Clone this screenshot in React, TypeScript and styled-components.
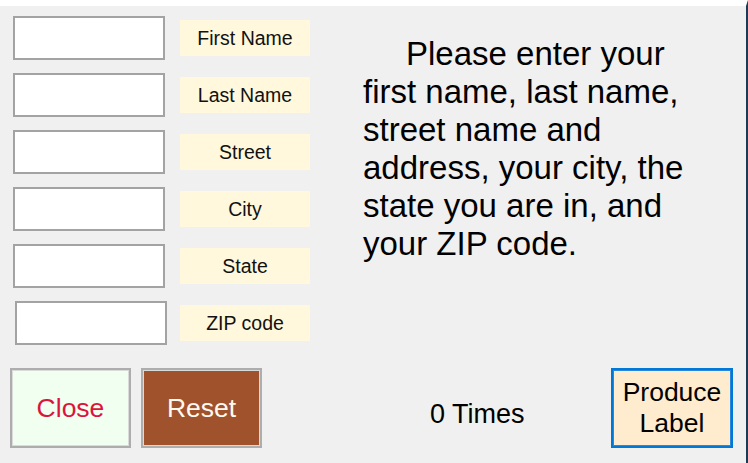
import React, { useState } from 'react';
import styled, { createGlobalStyle } from 'styled-components';

const GlobalStyle = createGlobalStyle`
  html, body {
    margin: 0;
    padding: 0;
    background: #ffffff;
  }
  * {
    box-sizing: border-box;
  }
`;

const Window = styled.div`
  width: 748px;
  height: 463px;
  background: #f0f0f0;
  border-top: 6px solid #ffffff;
  border-right: 2px solid #1f3a52;
  font-family: 'Liberation Sans', Arial, sans-serif;
  color: #000;
  overflow: hidden;
`;

const TopSection = styled.div`
  display: flex;
  align-items: flex-start;
  padding: 10px 0 0 13px;
`;

const FieldList = styled.div`
  display: flex;
  flex-direction: column;
  gap: 13px;
`;

const FieldRow = styled.div<{ $shift?: number }>`
  display: flex;
  align-items: center;
  gap: 15px;
  height: 44px;
  padding-left: ${({ $shift }) => $shift || 0}px;
`;

const TextBox = styled.input`
  width: 152px;
  height: 44px;
  margin: 0;
  padding: 2px 6px;
  background: #ffffff;
  border: 2px solid #a3a3a3;
  font-family: inherit;
  font-size: 19px;
  outline: none;
`;

const FieldLabel = styled.div<{ $shift?: number }>`
  display: flex;
  align-items: center;
  justify-content: center;
  width: 130px;
  height: 36px;
  margin-left: ${({ $shift }) => -($shift || 0)}px;
  background: #fff8dc;
  font-size: 19.5px;
  color: #111;
`;

const Instructions = styled.p`
  margin: 19px 0 0 53px;
  font-size: 33px;
  line-height: 38px;
  text-indent: 43px;
  color: #000;
`;

const BottomBar = styled.div`
  display: flex;
  align-items: center;
  gap: 10px;
  padding: 23px 0 0 10px;
`;

const FormButton = styled.button<{ $bg: string; $fg: string; $accent?: boolean }>`
  width: ${({ $accent }) => ($accent ? 122 : 121)}px;
  height: 80px;
  margin: 0;
  padding: 0;
  background: ${({ $bg }) => $bg};
  color: ${({ $fg }) => $fg};
  border: 2px solid ${({ $accent }) => ($accent ? '#0078d7' : '#adadad')};
  box-shadow: inset 0 0 0 1px ${({ $accent }) => ($accent ? '#2a88dc' : '#dadada')};
  font-family: inherit;
  font-size: 26.5px;
  line-height: 31px;
  cursor: pointer;
`;

const Counter = styled.div`
  width: 329px;
  padding: 12px 0 0 158px;
  font-size: 27px;
`;

const fields = ['First Name', 'Last Name', 'Street', 'City', 'State', 'ZIP code'];

export default function App() {
  const [values, setValues] = useState<string[]>(fields.map(() => ''));
  const [count, setCount] = useState(0);

  const update = (i: number, v: string) => {
    const next = [...values];
    next[i] = v;
    setValues(next);
  };

  return (
    <>
      <GlobalStyle />
      <Window>
        <TopSection>
          <FieldList>
            {fields.map((name, i) => {
              const shift = name === 'ZIP code' ? 2 : 0;
              return (
                <FieldRow key={name} $shift={shift}>
                  <TextBox value={values[i]} onChange={(e) => update(i, e.target.value)} />
                  <FieldLabel $shift={shift}>{name}</FieldLabel>
                </FieldRow>
              );
            })}
          </FieldList>
          <Instructions>
            Please enter your
            <br />
            first name, last name,
            <br />
            street name and
            <br />
            address, your city, the
            <br />
            state you are in, and
            <br />
            your ZIP code.
          </Instructions>
        </TopSection>
        <BottomBar>
          <FormButton $bg="#f0fff0" $fg="#dc143c">Close</FormButton>
          <FormButton $bg="#a0522d" $fg="#fffaf0" onClick={() => setValues(fields.map(() => ''))}>
            Reset
          </FormButton>
          <Counter>{count} Times</Counter>
          <FormButton $bg="#ffebcd" $fg="#000" $accent onClick={() => setCount(count + 1)}>
            Produce
            <br />
            Label
          </FormButton>
        </BottomBar>
      </Window>
    </>
  );
}
